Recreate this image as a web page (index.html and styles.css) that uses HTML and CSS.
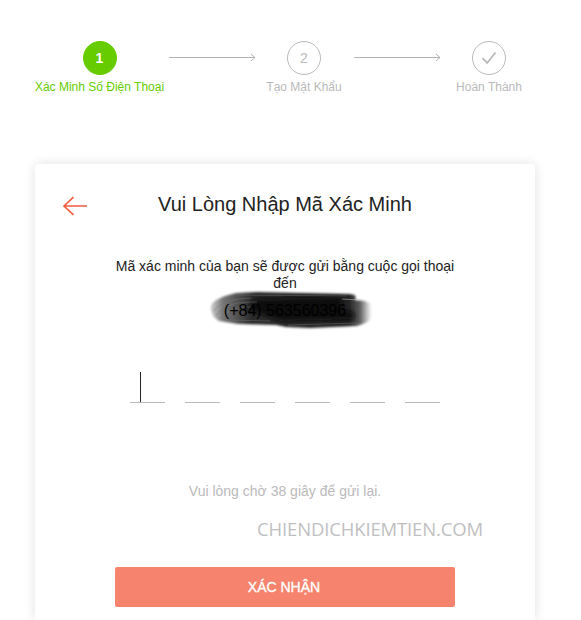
FILE: index.html
```html
<!DOCTYPE html>
<html lang="vi">
<head>
<meta charset="utf-8">
<title>Xác Minh</title>
<link rel="stylesheet" href="styles.css">
</head>
<body>
<ol class="steps">
  <li class="step step-active"><span class="circle">1</span><span class="label">Xác Minh Số Điện Thoại</span></li>
  <li class="connector"><svg width="87" height="9" viewBox="0 0 87 9"><path d="M0 4.5H86M82 1l4 3.5L82 8"/></svg></li>
  <li class="step"><span class="circle">2</span><span class="label">Tạo Mật Khẩu</span></li>
  <li class="connector"><svg width="87" height="9" viewBox="0 0 87 9"><path d="M0 4.5H86M82 1l4 3.5L82 8"/></svg></li>
  <li class="step"><span class="circle"><svg class="check" width="16" height="14" viewBox="0 0 16 14"><path d="M1.5 7.2L6.2 12L14.5 1.5"/></svg></span><span class="label">Hoàn Thành</span></li>
</ol>
<main class="card">
  <header class="card-header">
    <svg class="back" width="26" height="20" viewBox="0 0 26 20"><path d="M25 10H2M11.5 1.2L2 10L11.5 18.8"/></svg>
    <h1>Vui Lòng Nhập Mã Xác Minh</h1>
  </header>
  <p class="message">Mã xác minh của bạn sẽ được gửi bằng cuộc gọi thoại đến</p>
  <div class="phone">
    <svg class="scribble" width="166" height="42" viewBox="0 0 166 42">
      <defs>
        <linearGradient id="ink">
          <stop offset="0" stop-color="#444" stop-opacity=".25"/>
          <stop offset=".08" stop-color="#444" stop-opacity=".75"/>
          <stop offset=".25" stop-color="#2c2c2c"/>
          <stop offset=".86" stop-color="#222"/>
          <stop offset=".93" stop-color="#333" stop-opacity=".8"/>
          <stop offset="1" stop-color="#444" stop-opacity=".05"/>
        </linearGradient>
        <filter id="soft" x="-10%" y="-20%" width="120%" height="140%"><feGaussianBlur stdDeviation=".8"/></filter>
        <filter id="softer" x="-10%" y="-60%" width="120%" height="220%"><feGaussianBlur stdDeviation="2"/></filter>
      </defs>
      <path fill="url(#ink)" filter="url(#soft)" d="M3 17C5 11 15 7 28 4L50 3L140 5C147 5 149 7 147 11L157 12L163 15V28C162 33 156 35 148 37L102 39L78 38L68 36L30 35L11 32C5 28 2 23 3 17Z"/>
      <path fill="#0c0c0c" filter="url(#softer)" d="M48 10L134 8V20L146 24V30L72 32L56 26L38 21Z"/>
      <g class="strokes">
        <path d="M6 22C12 13 23 10 43 9M8 26C18 15 28 13 49 13M12 29C22 20 31 17 43 18M29 6L138 7M20 31L62 32M80 36L152 34"/>
        <path class="light" d="M134 10L150 11"/>
      </g>
    </svg>
    <span class="number">(+84) 563560396</span>
  </div>
  <div class="code"><span class="digit focused"></span><span class="digit"></span><span class="digit"></span><span class="digit"></span><span class="digit"></span><span class="digit"></span></div>
  <p class="resend">Vui lòng chờ 38 giây để gửi lại.</p>
  <p class="watermark">CHIENDICHKIEMTIEN.COM</p>
  <button class="submit">XÁC NHẬN</button>
</main>
</body>
</html>
```

FILE: styles.css
```css
* { box-sizing: border-box; }
html, body { height: 620px; overflow: hidden; }
body {
  margin: 0;
  padding: 41px 46px 0 35px;
  background: #fff;
  color: #222;
  font-family: "Liberation Sans", Arial, sans-serif;
}
h1, p, ol { margin: 0; padding: 0; }
svg { display: block; fill: none; }

.steps {
  display: grid;
  grid-template-columns: 129px 102px 76px 115px 64px;
  height: 123px;
  list-style: none;
  color: #bababa;
}
.step { display: flex; flex-direction: column; align-items: center; }
.circle {
  display: flex;
  align-items: center;
  justify-content: center;
  width: 34px;
  height: 34px;
  border: 1px solid #bababa;
  border-radius: 50%;
  font-size: 14px;
}
.label { margin-top: 5px; font-size: 12px; line-height: 14px; white-space: nowrap; }
.step-active { color: #6c0; }
.step-active .circle { background: #6c0; border-color: #6c0; color: #fff; font-weight: bold; }
.connector { padding: 12px 0 0 5px; }
.connector:nth-child(4) { padding-left: 12px; }
.connector path { stroke: #b2b2b2; }
.check path { stroke: #b8b8b8; stroke-width: 1.8; }

.card {
  width: 500px;
  height: 456px;
  padding: 28px 80px 0;
  border-radius: 4px 4px 0 0;
  background: #fff;
  box-shadow: 0 0 12px rgba(0, 0, 0, .12);
}
.card-header { position: relative; }
.back { position: absolute; left: -53px; top: 4px; }
.back path { stroke: #f05a40; stroke-width: 1.6; }
h1 { font-size: 20px; font-weight: 400; line-height: 24px; text-align: center; white-space: nowrap; }
.message { margin-top: 42px; font-size: 14px; line-height: 17px; text-align: center; }
.phone { position: relative; height: 42px; margin-top: -3px; text-align: center; }
.scribble { position: absolute; left: 93px; top: 0; }
.strokes path { stroke: #777; stroke-width: 1; opacity: .45; }
.strokes .light { stroke: #ddd; }
.number { position: relative; font-size: 16px; line-height: 44px; color: #000; }
.code { display: flex; gap: 20px; margin: 41px 15px 0; }
.digit { width: 35px; height: 31px; border-bottom: 1px solid #bababa; }
.focused::before { content: ""; display: block; width: 1px; height: 30px; margin-left: 10px; background: #222; }
.resend { margin-top: 80px; font-size: 14px; line-height: 17px; text-align: center; color: #bababa; }
.watermark {
  margin: 16px 0 0 142px;
  font-family: "Open Sans", "Noto Sans", sans-serif;
  font-size: 18.5px;
  line-height: 26px;
  letter-spacing: -.15px;
  white-space: nowrap;
  color: #bfbfbf;
}
.submit {
  display: block;
  width: 340px;
  height: 40px;
  margin-top: 25px;
  padding: 0 2px 1px 0;
  border: 0;
  border-radius: 2px;
  background: #f5836d;
  color: #fff;
  font: 500 14px/38px "Liberation Sans", Arial, sans-serif;
  -webkit-text-stroke: .35px #fff;
}
```
